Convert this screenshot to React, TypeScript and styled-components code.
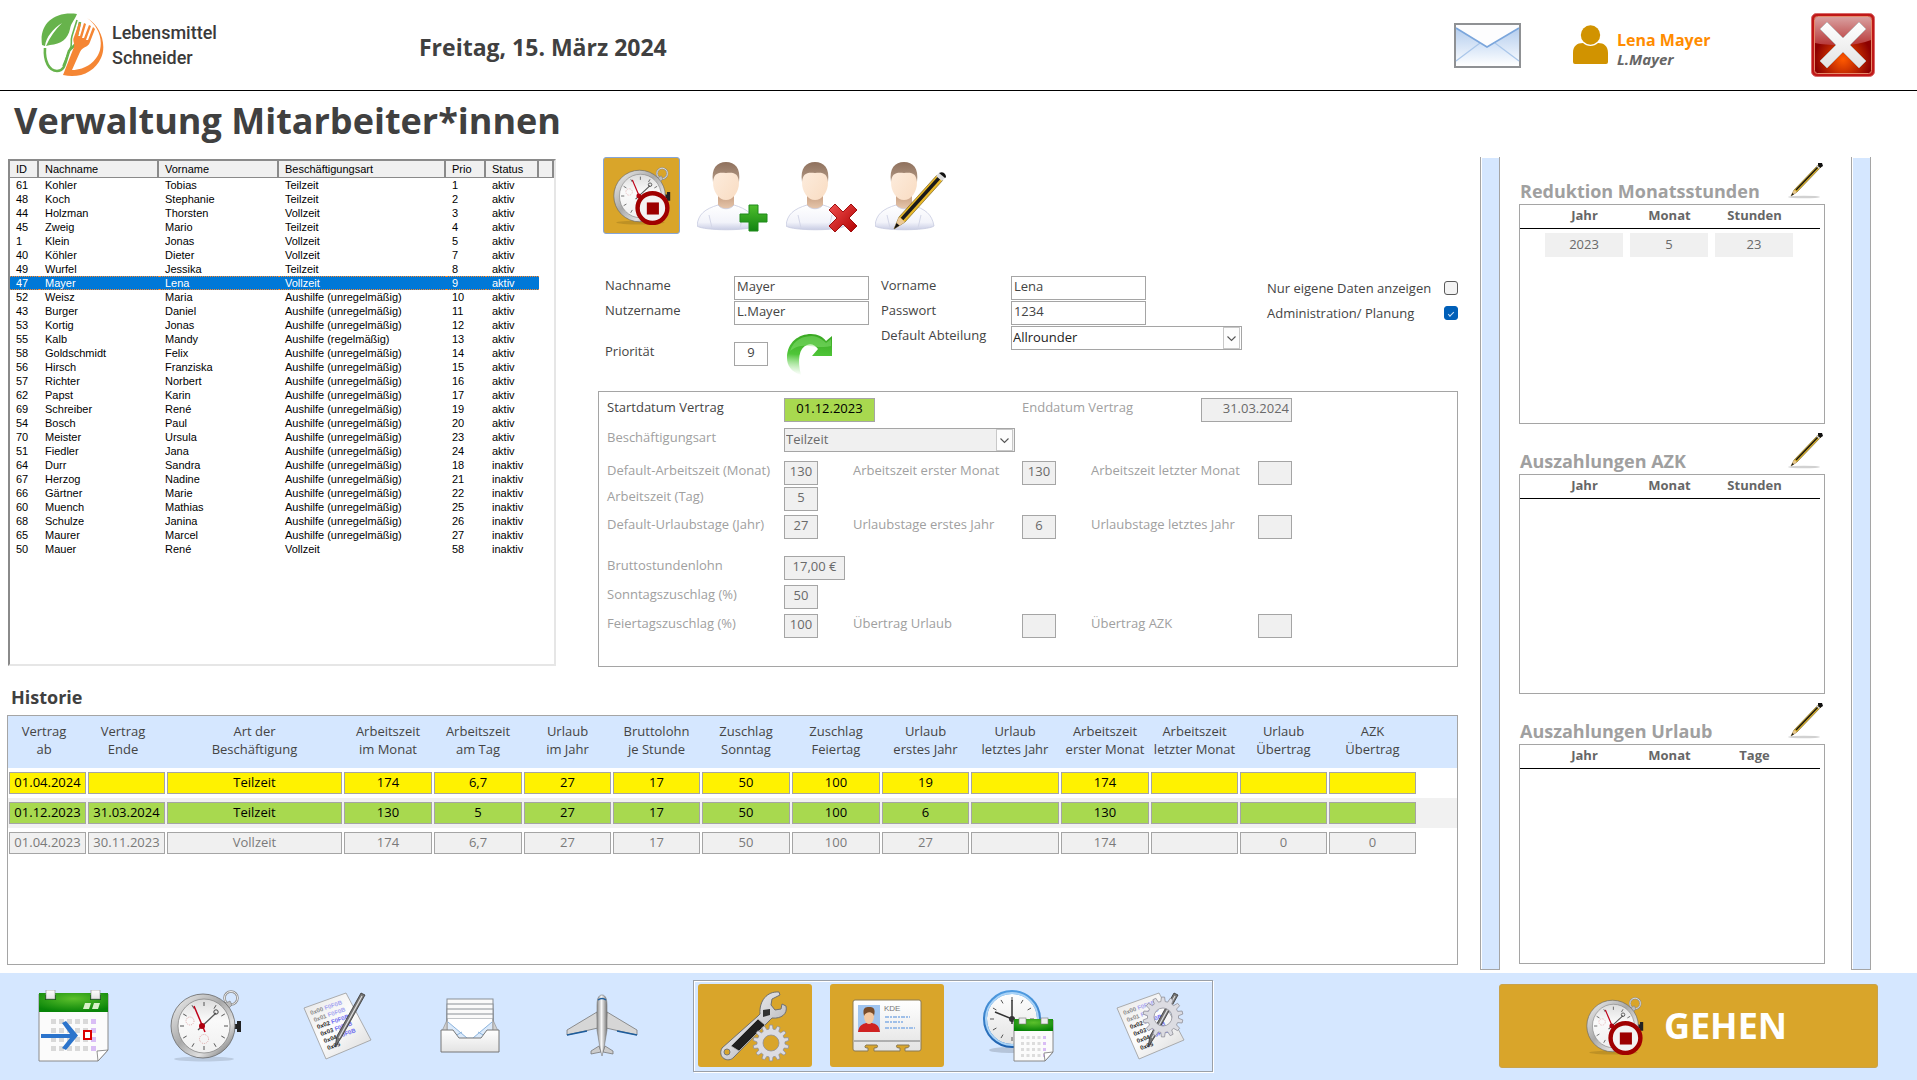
import React, { useState } from "react";
import styled, { createGlobalStyle, css } from "styled-components";

const ui = `"Open Sans", "Noto Sans", sans-serif`;
const gold = "#d9a52a";
const paleBlue = "#d5e7ff";
const line = "#a5a5a5";

const GlobalStyle = createGlobalStyle`
  *, *::before, *::after { box-sizing: border-box; }
  body { margin: 0; background: #fff; color: #444; font-family: ${ui}; font-size: 13px; line-height: 20px; }
  h1, h2, p { margin: 0; }
  button, input, select { font: inherit; color: inherit; margin: 0; }
  svg { display: block; }
`;

/* ---------- layout ---------- */

const Page = styled.div`
  min-height: 100vh;
  display: flex;
  flex-direction: column;
`;

const Header = styled.header`
  display: flex;
  align-items: center;
  height: 91px;
  padding: 0 42px 0 41px;
  border-bottom: 1px solid #000;
`;

const Brand = styled.div`
  display: flex;
  align-items: center;
  gap: 8px;
  width: 378px;
  font-family: Roboto, sans-serif;
  font-weight: 500;
  font-size: 18px;
  line-height: 25px;
  color: #3a3a3a;
`;

const DateText = styled.p`
  flex: 1;
  font-size: 23px;
  line-height: 32px;
  font-weight: 700;
  color: #404040;
  padding-top: 4px;
`;

const IconButton = styled.button`
  padding: 0;
  border: 0;
  background: none;
  cursor: pointer;
`;

const User = styled.div`
  display: flex;
  align-items: center;
  gap: 9px;
  width: 238px;
  margin-left: 52px;
`;

const UserText = styled.div`
  padding-top: 8px;
`;

const UserName = styled.p`
  font-weight: 700;
  font-size: 16px;
  line-height: 20px;
  color: #ff8c00;
`;

const Login = styled(UserName)`
  font-style: italic;
  font-size: 15px;
  line-height: 18px;
  color: #666;
`;

const Main = styled.main`
  flex: 1;
  display: grid;
  grid-template-columns: minmax(0, 1fr) 437px;
`;

const Content = styled.div`
  display: flex;
  flex-direction: column;
  padding: 0 22px 8px 7px;
`;

const PageTitle = styled.h1`
  font-size: 36px;
  line-height: 60px;
  font-weight: 700;
  color: #404040;
  padding: 0 0 6px 7px;
`;

const Upper = styled.div`
  display: flex;
  gap: 42px;
  height: 512px;
`;

/* ---------- staff list ---------- */

const ListBox = styled.div`
  width: 548px;
  height: 507px;
  margin: 2px 0 0 1px;
  flex: none;
  border: 2px solid;
  border-color: #8a8a8a #e6e6e6 #e6e6e6 #8a8a8a;
  overflow: hidden;
`;

const StaffTable = styled.table`
  width: 100%;
  table-layout: fixed;
  border-collapse: separate;
  border-spacing: 0;
  font-family: "Liberation Sans", Arial, sans-serif;
  font-size: 11px;
  line-height: 14px;
  color: #000;
  th, td { text-align: left; white-space: nowrap; padding: 0 0 0 6px; }
`;

const StaffHead = styled.th`
  height: 17px;
  font-weight: 400;
  background: #f0f0f0;
  border-right: 2px solid #8a8a8a;
  border-bottom: 1px solid #8a8a8a;
`;

const StaffRow = styled.tr<{ $selected: boolean }>`
  height: 14px;
  cursor: default;
  ${(p) =>
    p.$selected &&
    css`
      color: #fff;
      line-height: 12px;
      td {
        background: #0078d7;
        border-top: 1px dotted #ff8728;
        border-bottom: 1px dotted #ff8728;
      }
    `}
`;

/* ---------- form ---------- */

const FormSide = styled.div`
  flex: 1;
  min-width: 0;
`;

const Tools = styled.div`
  display: flex;
  align-items: flex-start;
  padding-left: 5px;
  gap: 17px;
  height: 119px;
`;

const ActiveTool = styled(IconButton)`
  display: grid;
  place-items: center;
  width: 77px;
  height: 77px;
  background: ${gold};
  border: 1px solid #86a5d8;
  border-radius: 3px;
`;

const PersonTool = styled(IconButton)`
  padding-top: 5px;
`;

const PersonForm = styled.form`
  display: flex;
  align-items: flex-start;
  height: 115px;
  padding-left: 7px;
`;

const Stack = styled.div<{ $width: number; $labels: number }>`
  width: ${(p) => p.$width}px;
  display: grid;
  grid-template-columns: ${(p) => p.$labels}px auto;
  justify-content: start;
  row-gap: 1px;
`;

const Label = styled.label<{ $muted?: boolean }>`
  line-height: 18px;
  white-space: nowrap;
  color: ${(p) => (p.$muted ? "#a0a0a0" : "#444")};
`;

const TextBox = styled.input<{ $w: number; $align?: string; $tone?: "muted" | "green" }>`
  width: ${(p) => p.$w}px;
  height: 24px;
  padding: 0 2px 4px;
  border: 1px solid ${line};
  border-radius: 0;
  outline: 0;
  text-align: ${(p) => p.$align ?? "left"};
  background: ${(p) => (p.$tone === "green" ? "#a8d94f" : p.$tone === "muted" ? "#f0f0f0" : "#fff")};
  color: ${(p) => (p.$tone === "green" ? "#000" : p.$tone === "muted" ? "#6a6a6a" : "#444")};
`;

const PriorityLabel = styled(Label)`
  padding-top: 8px;
`;

const PriorityLine = styled.div`
  display: flex;
  align-items: flex-start;
  gap: 19px;
  height: 44px;
  input { margin-top: 8px; }
`;

const Gap = styled.div`
  grid-column: 1 / -1;
  height: 7px;
`;

const SelectWrap = styled.div<{ $w: number }>`
  position: relative;
  width: ${(p) => p.$w}px;
  height: 24px;
  svg {
    position: absolute;
    right: 1px;
    top: 1px;
    pointer-events: none;
  }
`;

const SelectBox = styled.select<{ $muted?: boolean }>`
  appearance: none;
  width: 100%;
  height: 24px;
  padding: 0 20px 4px 1px;
  border: 1px solid ${line};
  border-radius: 0;
  background: ${(p) => (p.$muted ? "#f0f0f0" : "#fff")};
  color: ${(p) => (p.$muted ? "#6a6a6a" : "#222")};
`;

const Checks = styled.div`
  display: grid;
  grid-template-columns: 177px 14px;
  row-gap: 7px;
  align-items: center;
  padding-top: 3px;
`;

const Check = styled.input`
  appearance: none;
  width: 14px;
  height: 14px;
  border: 1px solid #5a5a5a;
  border-radius: 3px;
  background: #f3f3f3;
  display: grid;
  place-items: center;
  &:checked {
    background: #005fb8;
    border-color: #005fb8;
  }
  &:checked::after {
    content: "";
    width: 6px;
    height: 3px;
    border: solid #cfe4f8;
    border-width: 0 0 1px 1px;
    transform: rotate(-45deg);
  }
`;

const Contract = styled.form`
  display: grid;
  grid-template-columns: 177px 69px 169px 69px 110px 57px 34px;
  grid-template-rows: 30px 33px 26px 28px 41px 29px 29px 24px;
  height: 276px;
  padding: 6px 0 0 8px;
  border: 1px solid ${line};
`;

const Cell = styled.div<{ $row: number; $from: number; $to: number }>`
  display: flex;
  align-items: flex-start;
  grid-row: ${(p) => p.$row};
  grid-column: ${(p) => p.$from} / ${(p) => p.$to};
`;

/* ---------- history ---------- */

const SectionTitle = styled.h2`
  font-size: 18px;
  line-height: 32px;
  font-weight: 700;
  color: #404040;
  padding-left: 4px;
  margin: 12px 0 2px;
`;

const HistoryBox = styled.div`
  flex: 1;
  border: 1px solid ${line};
`;

const HistoryTable = styled.table`
  width: 100%;
  table-layout: fixed;
  border-collapse: separate;
  border-spacing: 0;
  td { padding: 0 1px; }
`;

const HistoryHead = styled.th`
  height: 52px;
  padding: 6px 0 10px;
  vertical-align: top;
  background: ${paleBlue};
  font-weight: 400;
  line-height: 18px;
  white-space: nowrap;
  &:nth-child(-n + 2) { padding-right: 7px; }
`;

type Tone = "yellow" | "green" | "grey";
const toneFill = { yellow: "#fff200", green: "#a8d94f", grey: "#f0f0f0" };

const HistoryRow = styled.tr<{ $tone: Tone }>`
  height: 30px;
  background: ${(p) => (p.$tone === "green" ? "#f1f1f1" : "#fff")};
  color: ${(p) => (p.$tone === "grey" ? "#7a7a7a" : "#000")};
  div { background: ${(p) => toneFill[p.$tone]}; }
`;

const HistoryCell = styled.div`
  height: 22px;
  border: 1px solid ${line};
  line-height: 19px;
  text-align: center;
`;

/* ---------- right side ---------- */

const Aside = styled.aside`
  display: flex;
  margin: 66px 46px 3px 0;
`;

const Bar = styled.div`
  width: 20px;
  border-left: 1px solid ${line};
  border-right: 1px solid ${line};
  border-bottom: 1px solid ${line};
  background: ${paleBlue};
  box-shadow: inset 1px 1px 0 #fff;
`;

const Cards = styled.div`
  flex: 1;
  display: flex;
  flex-direction: column;
  gap: 3px;
  padding: 0 26px 0 19px;
`;

const CardHead = styled.div`
  display: flex;
  align-items: flex-end;
  justify-content: space-between;
  height: 47px;
  padding: 0 2px 0 1px;
  h2 { font-size: 18px; line-height: 25px; font-weight: 700; color: #a0a0a0; }
  button { padding-bottom: 5px; }
`;

const CardBox = styled.div`
  height: 220px;
  border: 1px solid ${line};
  padding-right: 4px;
`;

const CardTable = styled.table`
  width: 100%;
  table-layout: fixed;
  border-collapse: separate;
  border-spacing: 0;
  th { height: 24px; padding: 0 0 2px; border-bottom: 1px solid #000; font-weight: 700; color: #666; line-height: 21px; }
  td { padding: 4px 4px 0 3px; color: #6a6a6a; }
`;

const CardValue = styled.div`
  height: 24px;
  line-height: 22px;
  text-align: center;
  background: #f0f0f0;
`;

/* ---------- footer ---------- */

const Footer = styled.footer`
  display: flex;
  align-items: flex-start;
  height: 107px;
  padding: 7px 39px 0 8px;
  background: ${paleBlue};
`;

const NavButton = styled(IconButton)`
  display: grid;
  place-items: center;
  width: 132px;
  height: 91px;
`;

const Frame = styled.div`
  display: flex;
  gap: 18px;
  width: 520px;
  height: 92px;
  margin-left: 25px;
  padding: 3px 4px;
  border: 1px solid #9aa0a8;
  box-shadow: inset 1px 1px 0 #fff, 1px 1px 0 #fff;
`;

const AdminButton = styled(IconButton)<{ $active?: boolean }>`
  display: grid;
  place-items: center;
  width: 114px;
  height: 83px;
  border-radius: 3px;
  background: ${(p) => (p.$active ? gold : "none")};
`;

const LeaveButton = styled(IconButton)`
  display: flex;
  align-items: center;
  justify-content: center;
  gap: 20px;
  width: 379px;
  height: 84px;
  margin: 4px 0 0 auto;
  padding-right: 4px;
  border: 1px solid #c9a24a;
  border-radius: 3px;
  background: ${gold};
  color: #fff;
  font-size: 36px;
  font-weight: 700;
`;

/* ---------- drawings ---------- */

const HiddenSvg = styled.svg`
  position: absolute;
`;

const SharedDefs = () => (
  <HiddenSvg width="0" height="0" aria-hidden="true">
    <defs>
      <linearGradient id="steel" x1="0" y1="0" x2="1" y2="1">
        <stop offset="0" stopColor="#f4f4f4" />
        <stop offset="0.45" stopColor="#a9a9a9" />
        <stop offset="0.7" stopColor="#e0e0e0" />
        <stop offset="1" stopColor="#555" />
      </linearGradient>
      <linearGradient id="face" x1="0" y1="0" x2="0" y2="1">
        <stop offset="0" stopColor="#dcdcdc" />
        <stop offset="0.4" stopColor="#fafafa" />
        <stop offset="1" stopColor="#f0f0f0" />
      </linearGradient>
      <linearGradient id="green" x1="0" y1="0" x2="0" y2="1">
        <stop offset="0" stopColor="#4fbe2c" />
        <stop offset="1" stopColor="#128412" />
      </linearGradient>
      <radialGradient id="calGreen" cx="0.5" cy="0.3" r="0.7">
        <stop offset="0" stopColor="#5cc02c" />
        <stop offset="1" stopColor="#088408" />
      </radialGradient>
      <linearGradient id="arrowFade" x1="0.3" y1="0" x2="0.2" y2="1">
        <stop offset="0" stopColor="#3aa823" />
        <stop offset="0.5" stopColor="#4fc638" />
        <stop offset="1" stopColor="#8be07a" stopOpacity="0" />
      </linearGradient>
      <linearGradient id="skin" x1="0" y1="0" x2="1" y2="1">
        <stop offset="0" stopColor="#fdeee0" />
        <stop offset="1" stopColor="#f9dcc2" />
      </linearGradient>
      <linearGradient id="neck" x1="0" y1="0" x2="0" y2="1">
        <stop offset="0" stopColor="#c9a184" />
        <stop offset="1" stopColor="#f3d6bd" />
      </linearGradient>
      <linearGradient id="hair" x1="0" y1="0" x2="0" y2="1">
        <stop offset="0" stopColor="#8f715d" />
        <stop offset="1" stopColor="#b39a86" />
      </linearGradient>
      <linearGradient id="shirt" x1="0" y1="0" x2="0" y2="1">
        <stop offset="0" stopColor="#ffffff" />
        <stop offset="0.7" stopColor="#f2f3fa" />
        <stop offset="1" stopColor="#c9cde4" />
      </linearGradient>
      <linearGradient id="paper" x1="0" y1="0" x2="1" y2="1">
        <stop offset="0" stopColor="#e6e6e6" />
        <stop offset="0.5" stopColor="#fdfdfd" />
        <stop offset="1" stopColor="#d8d8d8" />
      </linearGradient>
      <linearGradient id="white" x1="0" y1="0" x2="0" y2="1">
        <stop offset="0" stopColor="#fff" />
        <stop offset="1" stopColor="#e3e3e3" />
      </linearGradient>
      <linearGradient id="chrome" x1="0" y1="0" x2="1" y2="1">
        <stop offset="0" stopColor="#fff" />
        <stop offset="0.5" stopColor="#d4d4d8" />
        <stop offset="1" stopColor="#9a9aa0" />
      </linearGradient>
      <linearGradient id="flap" x1="0" y1="0" x2="0" y2="1">
        <stop offset="0" stopColor="#b4cdee" />
        <stop offset="1" stopColor="#f4f8fd" />
      </linearGradient>
      <linearGradient id="letter" x1="0" y1="0" x2="0" y2="1">
        <stop offset="0" stopColor="#cfe0f6" />
        <stop offset="1" stopColor="#fff" />
      </linearGradient>
      <radialGradient id="redGlow" cx="0.5" cy="0.75" r="0.5">
        <stop offset="0" stopColor="#ff5a00" />
        <stop offset="1" stopColor="#8c0000" />
      </radialGradient>
      <linearGradient id="gloss" x1="0" y1="0" x2="0" y2="1">
        <stop offset="0" stopColor="#d9a0a0" />
        <stop offset="1" stopColor="#b83838" />
      </linearGradient>
      <linearGradient id="red" x1="0" y1="0" x2="1" y2="1">
        <stop offset="0" stopColor="#f05050" />
        <stop offset="1" stopColor="#b00000" />
      </linearGradient>
      <linearGradient id="blueRing" x1="0" y1="0" x2="0" y2="1">
        <stop offset="0" stopColor="#4f9be0" />
        <stop offset="1" stopColor="#1f62b0" />
      </linearGradient>
      <linearGradient id="plane" x1="0" y1="0" x2="1" y2="0">
        <stop offset="0" stopColor="#8a8a8a" />
        <stop offset="0.45" stopColor="#f6f6f6" />
        <stop offset="1" stopColor="#777" />
      </linearGradient>
    </defs>
  </HiddenSvg>
);

const Logo = () => (
  <svg width="63" height="64" viewBox="0 0 63 64" aria-hidden="true">
    <path d="M1 32C-2 12 12-2 36 1C33 8 30 10 29 16C27 26 20 31 9 32L5 33C9 24 14 17 21 10C12 16 5 24 4 33Z" fill="#67b34c" />
    <path d="M4 35C3 48 8 58 16 58C24 58 24 50 28 38C31 33 36 33 35 27L39 9" fill="none" stroke="#67b34c" strokeWidth="2.6" />
    <path d="M36 7L31 23C29 29 32 31 29 36L22 53" fill="none" stroke="#67b34c" strokeWidth="1.6" />
    <path d="M46 5C60 13 66 32 60 45C54 59 38 66 22 62L33 34C34 30 31 28 33 24L38 10L40 11L37 23H39L43 10L45 11L41 25H43L48 12L50 13L45 27H47L52 14L54 16L49 29C47 35 42 33 39 39L31 57C45 57 56 48 59 37C62 24 56 12 46 5Z" fill="#f58634" />
  </svg>
);

const Envelope = () => (
  <svg width="67" height="45" viewBox="0 0 67 45" aria-hidden="true">
    <rect x="1" y="1" width="65" height="43" fill="#fdfdfe" stroke="#8f9194" strokeWidth="2" />
    <path d="M2 5L26 20L2 38Z" fill="url(#flap)" />
    <path d="M65 5L41 20L65 38Z" fill="url(#flap)" />
    <path d="M2 43V38L26 20L33 24L41 20L65 38V43Z" fill="url(#letter)" />
    <path d="M2 38L26 20M65 38L41 20" stroke="#a9c6ea" strokeWidth="1.2" />
    <path d="M2 5L33 24L65 5" fill="none" stroke="#7ba6dc" strokeWidth="1.6" />
  </svg>
);

const UserIcon = () => (
  <svg width="35" height="40" viewBox="0 0 35 40" fill="#d19300" aria-hidden="true">
    <circle cx="17.500" cy="10" r="9.700" />
    <path d="M0 37V28C0 21 4 18 10 18C14 22 21 22 25 18C31 18 35 21 35 28V37Q35 39 33 39H2Q0 39 0 37Z" />
  </svg>
);

const CloseIcon = () => (
  <svg width="64" height="64" viewBox="0 0 64 64" aria-hidden="true">
    <rect x="0.500" y="0.500" width="63" height="63" rx="5" fill="#c01818" stroke="#d86a6a" />
    <rect x="3.500" y="3.500" width="57" height="57" rx="3" fill="url(#redGlow)" stroke="#e58a6a" />
    <path d="M4 6Q4 4 6 4H58Q60 4 60 6V27Q45 33 28 32Q14 32 4 30Z" fill="url(#gloss)" />
    <path d="M16 9L32 25L48 9L55 16L39 32L55 48L48 55L32 39L16 55L9 48L25 32L9 16Z" fill="url(#white)" stroke="#b9b9b9" strokeWidth="0.8" />
  </svg>
);

const Ticks = ({ cx, cy, r }: { cx: number; cy: number; r: number }) => (
  <g stroke="#555" strokeWidth="1">
    {Array.from({ length: 12 }, (_, i) => {
      const a = (i * Math.PI) / 6;
      const inner = r - 4;
      return (
        <line key={i} x1={cx + Math.sin(a) * inner} y1={cy - Math.cos(a) * inner} x2={cx + Math.sin(a) * r} y2={cy - Math.cos(a) * r} />
      );
    })}
  </g>
);

const Stopwatch = ({ size, stop }: { size: number; stop?: boolean }) => (
  <svg width={size} height={size} viewBox="0 0 72 72" aria-hidden="true">
    <ellipse cx="34" cy="69" rx="30" ry="2.500" fill="#000" opacity="0.12" />
    <circle cx="61" cy="8" r="6.500" fill="none" stroke="#8e8e8e" strokeWidth="2.600" />
    <circle cx="61" cy="8" r="6.500" fill="none" stroke="#eee" strokeWidth="1" />
    <path d="M54 14L60 11L62 15L57 20Z" fill="#bbb" stroke="#777" strokeWidth="0.600" />
    <path d="M64 34H67V31H71V42H67V39H64Z" fill="#222" />
    <circle cx="33" cy="36" r="32" fill="url(#steel)" stroke="#666" strokeWidth="0.800" />
    <ellipse cx="34" cy="36" rx="26" ry="27" fill="url(#face)" stroke="#888" strokeWidth="0.800" />
    <Ticks cx={34} cy={36} r={24} />
    <circle cx="20" cy="31" r="4" fill="none" stroke="#c77" strokeWidth="0.600" strokeDasharray="1 1" />
    <circle cx="34" cy="49" r="4.500" fill="none" stroke="#c77" strokeWidth="0.600" strokeDasharray="1 1" />
    <path d="M28 40L46 23" stroke="#555" strokeWidth="1.300" />
    <circle cx="46" cy="22" r="2.200" fill="none" stroke="#444" />
    <path d="M24 16L35 42" stroke="#c00018" strokeWidth="1.500" />
    <circle cx="32" cy="36" r="3" fill="#b00010" />
    {stop && (
      <g>
        <circle cx="49" cy="51" r="18.500" fill="#f3f3f3" stroke="#a00000" strokeWidth="5.500" />
        <rect x="42" y="44" width="15" height="15" fill="#9c0000" />
      </g>
    )}
  </svg>
);

const Person = ({ kind }: { kind: "add" | "remove" | "edit" }) => (
  <svg width="72" height="70" viewBox="0 0 72 70" aria-hidden="true">
    <path d="M21 34H37V46L29 52L21 46Z" fill="url(#neck)" />
    <path d="M0 64C1 52 8 47 21 43C25 48 33 48 37 43C50 47 57 52 59 64C52 69 7 69 0 64Z" fill="url(#shirt)" stroke="#c6cae0" strokeWidth="0.800" />
    <path d="M12 53L15 66M46 53L43 66" stroke="#d4d7e8" strokeWidth="1" />
    <ellipse cx="29" cy="20" rx="13" ry="18" fill="url(#skin)" />
    <path d="M16 20C14 6 20 0 29 0C38 0 44 6 42 20C41 12 38 10 29 11C20 10 17 12 16 20Z" fill="url(#hair)" />
    {kind === "add" && (
      <path d="M52 43H61V52H70V60H61V69H52V60H43V52H52Z" fill="url(#green)" stroke="#1f8a1a" strokeWidth="1" />
    )}
    {kind === "remove" && (
      <path d="M49 42L57 50L65 42L71 48L63 56L71 64L65 70L57 62L49 70L43 64L51 56L43 48Z" fill="url(#red)" stroke="#a01010" strokeWidth="1" />
    )}
    {kind === "edit" && (
      <g>
        <path d="M19 67L24 55L62 13L68 18L30 60Z" fill="#e9b92a" stroke="#6a5310" strokeWidth="0.600" />
        <path d="M27 57L64 16" stroke="#1a1a1a" strokeWidth="3.400" />
        <path d="M19 67L24 55L30 60Z" fill="#ecc998" />
        <path d="M19 67L21.500 61L24.500 63.500Z" fill="#111" />
        <path d="M61 14L64 11L70 16L67 19Z" fill="#ddd" />
        <path d="M64 11Q68 9 70 12Q72 15 70 16Z" fill="#111" />
      </g>
    )}
  </svg>
);

const Pencil = () => (
  <svg width="35" height="37" viewBox="0 0 35 37" aria-hidden="true">
    <ellipse cx="16" cy="35" rx="16" ry="1.300" fill="#000" opacity="0.18" />
    <path d="M3 34L6 28L30 3L33 5L9 30Z" fill="#d9b02a" stroke="#5b4a12" strokeWidth="0.500" />
    <path d="M8 28L31 4" stroke="#111" strokeWidth="1.400" />
    <path d="M3 34L6 28L9 30Z" fill="#e7c690" />
    <path d="M3 34L4.500 31L6 32.200Z" fill="#111" />
    <path d="M30 1L34 1L35 4L32 6L30 3Z" fill="#111" />
    <path d="M28.500 3.500L31.500 6.500" stroke="#ddd" strokeWidth="1.200" />
  </svg>
);

const Refresh = () => (
  <svg width="46" height="44" viewBox="0 0 46 44" aria-hidden="true">
    <path d="M0 24C0 8 12 0 24 0C31 0 36 3 39 7L45 2V22H25L31 15C28 11 24 9 20 11C12 14 10 26 14 41C4 38 0 31 0 24Z" fill="url(#arrowFade)" />
    <path d="M3 17C7 5 17 2 25 2C31 2 36 6 39 9L44 5V12C30 16 16 6 3 17Z" fill="#8ee67a" opacity="0.450" />
  </svg>
);

const Chevron = () => (
  <svg width="18" height="22" viewBox="0 0 18 22" aria-hidden="true">
    <rect x="0.500" y="0.500" width="16" height="21" fill="#fdfdfd" stroke="#c8c8c8" />
    <path d="M4.500 9.500L8.500 13.500L12.500 9.500" fill="none" stroke="#555" strokeWidth="1.100" />
  </svg>
);

const CalendarArrow = () => (
  <svg width="72" height="72" viewBox="0 0 72 72" aria-hidden="true">
    <path d="M1 4H70V60L60 71H1Z" fill="#fbfbfb" stroke="#8a8a8a" />
    <rect x="1" y="3" width="69" height="19" fill="url(#calGreen)" />
    <rect x="7" y="5" width="11" height="5" fill="#0a5a0a" />
    <rect x="52" y="5" width="11" height="5" fill="#0a5a0a" />
    <rect x="8" y="0" width="9" height="9" fill="url(#white)" stroke="#888" strokeWidth="0.600" />
    <rect x="53" y="0" width="9" height="9" fill="url(#white)" stroke="#888" strokeWidth="0.600" />
    <path d="M47 13H53L51 19H45ZM56 13H62L60 19H54Z" fill="#d8f0c8" />
    {[0, 1, 2, 3].map((r) =>
      [0, 1, 2, 3, 4, 5].map((c) => (
        <rect key={`${r}-${c}`} x={13 + c * 8} y={29 + r * 9} width="5" height="5" fill={c === 5 ? "#d9bdf5" : "#d9d9d9"} />
      ))
    )}
    <path d="M3 44H32L24 33L28 31L40 45.500L28 60L24 58L32 48H3Z" fill="#2b74cc" />
    <rect x="46" y="41" width="7" height="8" fill="#fff" stroke="#dc0000" strokeWidth="2" />
    <path d="M60 71L59 61L70 60Z" fill="#fff" stroke="#777" strokeWidth="0.800" />
  </svg>
);

const GearShape = ({ cx, cy, r, hole }: { cx: number; cy: number; r: number; hole: number }) => {
  const teeth = 14;
  const pts: string[] = [];
  for (let i = 0; i < teeth; i++) {
    const step = (Math.PI * 2) / teeth;
    [
      [-0.32, 0.78],
      [-0.18, 1],
      [0.18, 1],
      [0.32, 0.78],
    ].forEach(([o, k]) => {
      const a = (i + o) * step;
      pts.push(`${(cx + Math.sin(a) * r * k).toFixed(1)} ${(cy - Math.cos(a) * r * k).toFixed(1)}`);
    });
  }
  const ring = `M${cx - hole} ${cy}a${hole} ${hole} 0 1 0 ${hole * 2} 0a${hole} ${hole} 0 1 0 ${-hole * 2} 0Z`;
  return <path d={`M${pts.join("L")}Z${ring}`} fillRule="evenodd" fill="#dcdce2" stroke="#8f8f98" strokeWidth="0.800" />;
};

const Notes = ({ gear }: { gear?: boolean }) => (
  <svg width="70" height="68" viewBox="0 0 70 68" aria-hidden="true">
    <path d="M1 16L43 1L68 48L23 67Z" fill="url(#paper)" stroke="#9a9a9a" strokeWidth="0.800" />
    <g fontFamily="Liberation Sans, sans-serif" fontSize="6" fontWeight="700">
      {[0, 1, 2, 3, 4, 5].map((i) => (
        <g key={i} transform={`translate(${8 + i * 3.4} ${23 + i * 7}) rotate(-19)`}>
          <text fill={i < 2 ? "#888" : "#222"}>{`0x0${i}`}</text>
          {i < 5 && <text x="15" fill={i < 2 ? "#a3a3f0" : "#6a6af0"}>F0F0B</text>}
        </g>
      ))}
    </g>
    <path d="M58 1L62 3L38 46L32 55L34 44Z" fill="#777" stroke="#333" strokeWidth="0.800" />
    <path d="M59 4L36 46" stroke="#e0e0e0" strokeWidth="1.200" />
    {gear && <GearShape cx={47} cy={25} r={20} hole={9} />}
  </svg>
);

const MailTray = () => (
  <svg width="60" height="56" viewBox="0 0 60 56" aria-hidden="true">
    {[0, 5, 10, 15, 20].map((y) => (
      <rect key={y} x="7" y={1 + y} width="46" height="20" fill="#fafafa" stroke="#8a8f96" strokeWidth="1" />
    ))}
    <path d="M7 22L2 33V52H58V33L53 22V42H7Z" fill="#cfcfcf" stroke="#888" strokeWidth="0.600" />
    <path d="M8 22H52V42H8Z" fill="#dceafa" />
    <path d="M8 24L26 39H34L52 24V21H8Z" fill="#fff" />
    <path d="M8 24L27 40M52 24L33 40M8 42L22 34M52 42L38 34" stroke="#8bb4de" strokeWidth="1" fill="none" />
    <path d="M1 32H13L19 40H41L47 32H59V54H1Z" fill="url(#white)" stroke="#777" strokeWidth="1" />
  </svg>
);

const Plane = () => (
  <svg width="74" height="64" viewBox="0 0 74 64" aria-hidden="true">
    <path d="M32 18L2 36V41L33 34ZM42 18L72 36V41L41 34Z" fill="#d6d6d6" stroke="#777" strokeWidth="0.800" />
    <path d="M2 41L22 37M72 41L52 37" stroke="#1c5c9c" strokeWidth="1.500" />
    <path d="M34 52L26 57V60L36 58ZM40 52L48 57V60L38 58Z" fill="#ccc" stroke="#777" strokeWidth="0.800" />
    <path d="M37 1C41 1 42 6 42 12V36L39 54L37 62L35 54L32 36V12C32 6 33 1 37 1Z" fill="url(#plane)" stroke="#777" strokeWidth="0.600" />
    <path d="M33 6Q37 3 41 6" stroke="#1c5c9c" strokeWidth="1.400" fill="none" />
  </svg>
);

const WrenchGear = () => (
  <svg width="72" height="72" viewBox="0 0 72 72" aria-hidden="true">
    <path d="M41 24C40 11 48 1 60 2L61 5L53 9L52 15L56 20L62 19L63 14L67 16C69 24 62 29 53 28L50 31L15 67C9 74-2 67 3 58L39 26Z" fill="url(#chrome)" stroke="#6f6f6f" strokeWidth="1" />
    <path d="M39 29L46 35L20 61L12 56Z" fill="#1f1f1f" stroke="#bbb" strokeWidth="0.800" />
    <path d="M44 20L51 19L51 25L44 27Z" fill="#333" />
    <circle cx="8" cy="62" r="3" fill={gold} stroke="#777" />
    <GearShape cx={52} cy={53} r={18} hole={8} />
  </svg>
);

const IdCard = () => (
  <svg width="70" height="54" viewBox="0 0 70 54" aria-hidden="true">
    <path d="M3 1H67Q69 1 69 3V50Q69 52 67 52H53V49Q58 49 57 46H45Q43 49 48 49V52H22V49Q27 49 25 46H14Q11 49 16 49V52H3Q1 52 1 50V3Q1 1 3 1Z" fill="url(#white)" stroke="#8a7a55" strokeWidth="1" />
    <path d="M2 42H68" stroke="#777" />
    <rect x="6" y="6" width="22" height="27" fill="#9fc4ef" />
    <path d="M6 33C7 26 11 25 14 24H20C24 25 27 26 28 33Z" fill="#cf2222" />
    <ellipse cx="17" cy="17" rx="5" ry="8" fill="#f4c9a2" />
    <path d="M12 17C10 8 14 8 17 8C21 8 24 9 22 17C21 12 14 12 12 17Z" fill="#7a4c2a" />
    <text x="32" y="12" fontFamily="Liberation Sans, sans-serif" fontSize="8" fill="#777">KDE</text>
    <path d="M33 18H58M33 23H51M33 29H63" stroke="#9fbfe8" strokeWidth="1.800" strokeDasharray="4 1 2 1" />
  </svg>
);

const ClockCalendar = () => (
  <svg width="72" height="72" viewBox="0 0 72 72" aria-hidden="true">
    <ellipse cx="26" cy="60" rx="20" ry="3" fill="#000" opacity="0.150" />
    <circle cx="29" cy="29" r="27" fill="url(#white)" stroke="url(#blueRing)" strokeWidth="4" />
    <circle cx="29" cy="29" r="26" fill="none" stroke="#a9d3f7" strokeWidth="2" />
    <Ticks cx={29} cy={29} r={22} />
    <path d="M29 34V10M34 31L12 22" stroke="#333" strokeWidth="1.500" />
    <circle cx="29" cy="29" r="3" fill="#333" />
    <path d="M31 30H70V62L62 71H31Z" fill="#fbfbfb" stroke="#888" />
    <rect x="31" y="29" width="39" height="12" fill="url(#calGreen)" />
    <rect x="36" y="28" width="7" height="6" fill="#eee" stroke="#777" strokeWidth="0.600" />
    <rect x="58" y="28" width="7" height="6" fill="#eee" stroke="#777" strokeWidth="0.600" />
    {[0, 1, 2, 3].map((r) =>
      [0, 1, 2, 3, 4].map((c) => (
        <rect key={`${r}-${c}`} x={38 + c * 5.5} y={46 + r * 6} width="3" height="3" fill={c === 4 ? "#d9bdf5" : "#dcdcdc"} />
      ))
    )}
    <path d="M62 71L61 63L70 62Z" fill="#fff" stroke="#777" strokeWidth="0.800" />
  </svg>
);

/* ---------- data ---------- */

const u = "Aushilfe (unregelmäßig)";
const staff: string[][] = [
  ["61", "Kohler", "Tobias", "Teilzeit", "1", "aktiv"],
  ["48", "Koch", "Stephanie", "Teilzeit", "2", "aktiv"],
  ["44", "Holzman", "Thorsten", "Vollzeit", "3", "aktiv"],
  ["45", "Zweig", "Mario", "Teilzeit", "4", "aktiv"],
  ["1", "Klein", "Jonas", "Vollzeit", "5", "aktiv"],
  ["40", "Köhler", "Dieter", "Vollzeit", "7", "aktiv"],
  ["49", "Wurfel", "Jessika", "Teilzeit", "8", "aktiv"],
  ["47", "Mayer", "Lena", "Vollzeit", "9", "aktiv"],
  ["52", "Weisz", "Maria", u, "10", "aktiv"],
  ["43", "Burger", "Daniel", u, "11", "aktiv"],
  ["53", "Kortig", "Jonas", u, "12", "aktiv"],
  ["55", "Kalb", "Mandy", "Aushilfe (regelmäßig)", "13", "aktiv"],
  ["58", "Goldschmidt", "Felix", u, "14", "aktiv"],
  ["56", "Hirsch", "Franziska", u, "15", "aktiv"],
  ["57", "Richter", "Norbert", u, "16", "aktiv"],
  ["62", "Papst", "Karin", u, "17", "aktiv"],
  ["69", "Schreiber", "René", u, "19", "aktiv"],
  ["54", "Bosch", "Paul", u, "20", "aktiv"],
  ["70", "Meister", "Ursula", u, "23", "aktiv"],
  ["51", "Fiedler", "Jana", u, "24", "aktiv"],
  ["64", "Durr", "Sandra", u, "18", "inaktiv"],
  ["67", "Herzog", "Nadine", u, "21", "inaktiv"],
  ["66", "Gärtner", "Marie", u, "22", "inaktiv"],
  ["60", "Muench", "Mathias", u, "25", "inaktiv"],
  ["68", "Schulze", "Janina", u, "26", "inaktiv"],
  ["65", "Maurer", "Marcel", u, "27", "inaktiv"],
  ["50", "Mauer", "René", "Vollzeit", "58", "inaktiv"],
];

const staffColumns: [string, number][] = [
  ["ID", 29],
  ["Nachname", 120],
  ["Vorname", 120],
  ["Beschäftigungsart", 167],
  ["Prio", 40],
  ["Status", 53],
];

type Field = { label: string; value: string; row: number; at: [number, number, number]; width?: number; align?: string };

const contractFields: Field[] = [
  { label: "Enddatum Vertrag", value: "31.03.2024", row: 1, at: [4, 6, 8], width: 91, align: "right" },
  { label: "Default-Arbeitszeit (Monat)", value: "130", row: 3, at: [1, 2, 3] },
  { label: "Arbeitszeit erster Monat", value: "130", row: 3, at: [3, 4, 5] },
  { label: "Arbeitszeit letzter Monat", value: "", row: 3, at: [5, 7, 8] },
  { label: "Arbeitszeit (Tag)", value: "5", row: 4, at: [1, 2, 3] },
  { label: "Default-Urlaubstage (Jahr)", value: "27", row: 5, at: [1, 2, 3] },
  { label: "Urlaubstage erstes Jahr", value: "6", row: 5, at: [3, 4, 5] },
  { label: "Urlaubstage letztes Jahr", value: "", row: 5, at: [5, 7, 8] },
  { label: "Bruttostundenlohn", value: "17,00 €", row: 6, at: [1, 2, 3], width: 61 },
  { label: "Sonntagszuschlag (%)", value: "50", row: 7, at: [1, 2, 3] },
  { label: "Feiertagszuschlag (%)", value: "100", row: 8, at: [1, 2, 3] },
  { label: "Übertrag Urlaub", value: "", row: 8, at: [3, 4, 5] },
  { label: "Übertrag AZK", value: "", row: 8, at: [5, 7, 8] },
];

const historyColumns: [string, string, number][] = [
  ["Vertrag", "ab", 79],
  ["Vertrag", "Ende", 79],
  ["Art der", "Beschäftigung", 177],
  ["Arbeitszeit", "im Monat", 90],
  ["Arbeitszeit", "am Tag", 90],
  ["Urlaub", "im Jahr", 89],
  ["Bruttolohn", "je Stunde", 89],
  ["Zuschlag", "Sonntag", 90],
  ["Zuschlag", "Feiertag", 90],
  ["Urlaub", "erstes Jahr", 89],
  ["Urlaub", "letztes Jahr", 90],
  ["Arbeitszeit", "erster Monat", 90],
  ["Arbeitszeit", "letzter Monat", 89],
  ["Urlaub", "Übertrag", 89],
  ["AZK", "Übertrag", 89],
];

const history: { tone: Tone; cells: string[] }[] = [
  { tone: "yellow", cells: ["01.04.2024", "", "Teilzeit", "174", "6,7", "27", "17", "50", "100", "19", "", "174", "", "", ""] },
  { tone: "green", cells: ["01.12.2023", "31.03.2024", "Teilzeit", "130", "5", "27", "17", "50", "100", "6", "", "130", "", "", ""] },
  { tone: "grey", cells: ["01.04.2023", "30.11.2023", "Vollzeit", "174", "6,7", "27", "17", "50", "100", "27", "", "174", "", "0", "0"] },
];

/* ---------- parts ---------- */

const TextField = ({ id, label, value }: { id: string; label: string; value: string }) => (
  <>
    <Label htmlFor={id}>{label}</Label>
    <TextBox id={id} defaultValue={value} $w={135} />
  </>
);

const Card = ({ title, unit, row }: { title: string; unit: string; row?: string[] }) => (
  <section>
    <CardHead>
      <h2>{title}</h2>
      <IconButton type="button" aria-label={`${title} bearbeiten`}>
        <Pencil />
      </IconButton>
    </CardHead>
    <CardBox>
      <CardTable>
        <colgroup>
          <col width="22" />
          <col width="85" />
          <col width="85" />
          <col width="85" />
          <col />
        </colgroup>
        <thead>
          <tr>
            <th />
            <th>Jahr</th>
            <th>Monat</th>
            <th>{unit}</th>
            <th />
          </tr>
        </thead>
        <tbody>
          {row && (
            <tr>
              <td />
              {row.map((v) => (
                <td key={v}>
                  <CardValue>{v}</CardValue>
                </td>
              ))}
            </tr>
          )}
        </tbody>
      </CardTable>
    </CardBox>
  </section>
);

export default function App() {
  const [selected, setSelected] = useState("47");
  return (
    <Page>
      <GlobalStyle />
      <SharedDefs />
      <Header>
        <Brand>
          <Logo />
          <div>
            Lebensmittel
            <br />
            Schneider
          </div>
        </Brand>
        <DateText>Freitag, 15. März 2024</DateText>
        <IconButton type="button" aria-label="Nachrichten">
          <Envelope />
        </IconButton>
        <User>
          <UserIcon />
          <UserText>
            <UserName>Lena Mayer</UserName>
            <Login>L.Mayer</Login>
          </UserText>
        </User>
        <IconButton type="button" aria-label="Schließen">
          <CloseIcon />
        </IconButton>
      </Header>

      <Main>
        <Content>
          <PageTitle>Verwaltung Mitarbeiter*innen</PageTitle>
          <Upper>
            <ListBox>
              <StaffTable>
                <colgroup>
                  {staffColumns.map(([name, width]) => (
                    <col key={name} width={width} />
                  ))}
                  <col />
                </colgroup>
                <thead>
                  <tr>
                    {staffColumns.map(([name]) => (
                      <StaffHead key={name}>{name}</StaffHead>
                    ))}
                    <StaffHead />
                  </tr>
                </thead>
                <tbody>
                  {staff.map((row) => (
                    <StaffRow key={row[0]} $selected={row[0] === selected} onClick={() => setSelected(row[0])}>
                      {row.map((value, i) => (
                        <td key={i}>{value}</td>
                      ))}
                    </StaffRow>
                  ))}
                </tbody>
              </StaffTable>
            </ListBox>

            <FormSide>
              <Tools>
                <ActiveTool type="button" aria-label="Zeiterfassung beenden">
                  <Stopwatch size={58} stop />
                </ActiveTool>
                <PersonTool type="button" aria-label="Mitarbeiter hinzufügen">
                  <Person kind="add" />
                </PersonTool>
                <PersonTool type="button" aria-label="Mitarbeiter entfernen">
                  <Person kind="remove" />
                </PersonTool>
                <PersonTool type="button" aria-label="Mitarbeiter bearbeiten">
                  <Person kind="edit" />
                </PersonTool>
              </Tools>

              <PersonForm>
                <Stack $width={278} $labels={129}>
                  <TextField id="nachname" label="Nachname" value="Mayer" />
                  <TextField id="nutzer" label="Nutzername" value="L.Mayer" />
                  <Gap />
                  <PriorityLabel htmlFor="prio">Priorität</PriorityLabel>
                  <PriorityLine>
                    <TextBox id="prio" defaultValue="9" $w={34} $align="center" />
                    <IconButton type="button" aria-label="Aktualisieren">
                      <Refresh />
                    </IconButton>
                  </PriorityLine>
                </Stack>
                <Stack $width={389} $labels={130}>
                  <TextField id="vorname" label="Vorname" value="Lena" />
                  <TextField id="passwort" label="Passwort" value="1234" />
                  <Label htmlFor="abteilung">Default Abteilung</Label>
                  <SelectWrap $w={231}>
                    <SelectBox id="abteilung">
                      <option>Allrounder</option>
                    </SelectBox>
                    <Chevron />
                  </SelectWrap>
                </Stack>
                <Checks>
                  <Label htmlFor="eigene">Nur eigene Daten anzeigen</Label>
                  <Check id="eigene" type="checkbox" />
                  <Label htmlFor="admin">Administration/ Planung</Label>
                  <Check id="admin" type="checkbox" defaultChecked />
                </Checks>
              </PersonForm>

              <Contract>
                <Cell $row={1} $from={1} $to={2}>
                  <Label htmlFor="start">Startdatum Vertrag</Label>
                </Cell>
                <Cell $row={1} $from={2} $to={4}>
                  <TextBox id="start" defaultValue="01.12.2023" $w={91} $align="center" $tone="green" />
                </Cell>
                <Cell $row={2} $from={1} $to={2}>
                  <Label htmlFor="art" $muted>
                    Beschäftigungsart
                  </Label>
                </Cell>
                <Cell $row={2} $from={2} $to={4}>
                  <SelectWrap $w={231}>
                    <SelectBox id="art" $muted>
                      <option>Teilzeit</option>
                    </SelectBox>
                    <Chevron />
                  </SelectWrap>
                </Cell>
                {contractFields.map((f) => (
                  <React.Fragment key={f.label}>
                    <Cell $row={f.row} $from={f.at[0]} $to={f.at[1]}>
                      <Label htmlFor={f.label} $muted>
                        {f.label}
                      </Label>
                    </Cell>
                    <Cell $row={f.row} $from={f.at[1]} $to={f.at[2]}>
                      <TextBox id={f.label} defaultValue={f.value} readOnly $w={f.width ?? 34} $align={f.align ?? "center"} $tone="muted" />
                    </Cell>
                  </React.Fragment>
                ))}
              </Contract>
            </FormSide>
          </Upper>

          <SectionTitle>Historie</SectionTitle>
          <HistoryBox>
            <HistoryTable>
              <colgroup>
                {historyColumns.map(([, , width], i) => (
                  <col key={i} width={width} />
                ))}
                <col />
              </colgroup>
              <thead>
                <tr>
                  {historyColumns.map(([a, b], i) => (
                    <HistoryHead key={i}>
                      {a}
                      <br />
                      {b}
                    </HistoryHead>
                  ))}
                  <HistoryHead />
                </tr>
              </thead>
              <tbody>
                {history.map((row) => (
                  <HistoryRow key={row.cells[0]} $tone={row.tone}>
                    {row.cells.map((value, i) => (
                      <td key={i}>
                        <HistoryCell>{value}</HistoryCell>
                      </td>
                    ))}
                    <td />
                  </HistoryRow>
                ))}
              </tbody>
            </HistoryTable>
          </HistoryBox>
        </Content>

        <Aside>
          <Bar />
          <Cards>
            <Card title="Reduktion Monatsstunden" unit="Stunden" row={["2023", "5", "23"]} />
            <Card title="Auszahlungen AZK" unit="Stunden" />
            <Card title="Auszahlungen Urlaub" unit="Tage" />
          </Cards>
          <Bar />
        </Aside>
      </Main>

      <Footer>
        <NavButton type="button" aria-label="Kalender">
          <CalendarArrow />
        </NavButton>
        <NavButton type="button" aria-label="Zeiten">
          <Stopwatch size={72} />
        </NavButton>
        <NavButton type="button" aria-label="Notizen">
          <Notes />
        </NavButton>
        <NavButton type="button" aria-label="Postfach">
          <MailTray />
        </NavButton>
        <NavButton type="button" aria-label="Urlaub">
          <Plane />
        </NavButton>
        <Frame>
          <AdminButton type="button" $active aria-label="Einstellungen">
            <WrenchGear />
          </AdminButton>
          <AdminButton type="button" $active aria-label="Mitarbeiter">
            <IdCard />
          </AdminButton>
          <AdminButton type="button" aria-label="Zeitplanung">
            <ClockCalendar />
          </AdminButton>
          <AdminButton type="button" aria-label="Auswertung">
            <Notes gear />
          </AdminButton>
        </Frame>
        <LeaveButton type="button">
          <Stopwatch size={58} stop />
          GEHEN
        </LeaveButton>
      </Footer>
    </Page>
  );
}
